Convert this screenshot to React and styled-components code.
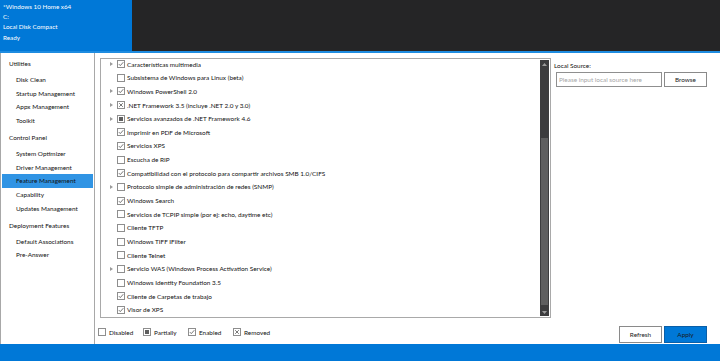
import styled, { createGlobalStyle } from "styled-components";

const GlobalStyle = createGlobalStyle`
  html, body { margin: 0; padding: 0; background: #ffffff; }
  body { font-family: Lato, "Noto Sans", sans-serif; }
`;

const features = [
  { text: "Características multimedia", state: "on", expand: true },
  { text: "Subsistema de Windows para Linux (beta)", state: "off" },
  { text: "Windows PowerShell 2.0", state: "on", expand: true },
  { text: ".NET Framework 3.5 (incluye .NET 2.0 y 3.0)", state: "removed", expand: true },
  { text: "Servicios avanzados de .NET Framework 4.6", state: "part", expand: true },
  { text: "Imprimir en PDF de Microsoft", state: "on" },
  { text: "Servicios XPS", state: "on" },
  { text: "Escucha de RIP", state: "off" },
  { text: "Compatibilidad con el protocolo para compartir archivos SMB 1.0/CIFS", state: "on" },
  { text: "Protocolo simple de administración de redes (SNMP)", state: "off", expand: true },
  { text: "Windows Search", state: "on" },
  { text: "Servicios de TCPIP simple (por ej: echo, daytime etc)", state: "off" },
  { text: "Cliente TFTP", state: "off" },
  { text: "Windows TIFF IFilter", state: "off" },
  { text: "Cliente Telnet", state: "off" },
  { text: "Servicio WAS (Windows Process Activation Service)", state: "off", expand: true },
  { text: "Windows Identity Foundation 3.5", state: "off" },
  { text: "Cliente de Carpetas de trabajo", state: "on" },
  { text: "Visor de XPS", state: "on" },
];

const nav = [
  { group: "Utilities", items: ["Disk Clean", "Startup Management", "Appx Management", "Toolkit"] },
  {
    group: "Control Panel",
    items: ["System Optimizer", "Driver Management", "Feature Management", "Capability", "Updates Management"],
  },
  { group: "Deployment Features", items: ["Default Associations", "Pre-Answer"] },
];

function Check({ state }) {
  return (
    <Box>
      {state === "on" && (
        <svg width="6" height="6" viewBox="0 0 6 6">
          <path d="M0.8 3.1 L2.3 4.6 L5.3 1.2" stroke="#555" strokeWidth="0.8" fill="none" />
        </svg>
      )}
      {state === "removed" && (
        <svg width="6" height="6" viewBox="0 0 6 6">
          <path d="M1.2 1.2 L4.8 4.8 M4.8 1.2 L1.2 4.8" stroke="#555" strokeWidth="0.8" fill="none" />
        </svg>
      )}
      {state === "part" && <Fill />}
    </Box>
  );
}

export default function App() {
  return (
    <>
      <GlobalStyle />
      <Shell>
        <Header>
          <Info>
            <InfoLine>*Windows 10 Home x64</InfoLine>
            <InfoLine>C:</InfoLine>
            <InfoLine>Local Disk Compact</InfoLine>
            <InfoLine>Ready</InfoLine>
          </Info>
          <Dark />
        </Header>
        <Body>
          <Sidebar>
            {nav.map((g) => (
              <div key={g.group}>
                <Group>{g.group}</Group>
                {g.items.map((i) => (
                  <NavItem key={i} $active={i === "Feature Management"}>
                    {i}
                  </NavItem>
                ))}
              </div>
            ))}
          </Sidebar>
          <Content>
            <Left>
              <List>
                <Rows>
                  {features.map((f) => (
                    <Row key={f.text}>
                      <Expander>{f.expand && <Arrow />}</Expander>
                      <Check state={f.state} />
                      <RowText>{f.text}</RowText>
                    </Row>
                  ))}
                </Rows>
                <Scrollbar>
                  <ScrollArrow>
                    <svg width="5" height="3" viewBox="0 0 5 3">
                      <path d="M0 3 L2.5 0 L5 3 Z" fill="#9a9a9a" />
                    </svg>
                  </ScrollArrow>
                  <Track>
                    <Thumb />
                  </Track>
                  <ScrollArrow>
                    <svg width="5" height="3" viewBox="0 0 5 3">
                      <path d="M0 0 L2.5 3 L5 0 Z" fill="#9a9a9a" />
                    </svg>
                  </ScrollArrow>
                </Scrollbar>
              </List>
              <Legend>
                <LegendItem>
                  <Check state="off" />
                  <span>Disabled</span>
                </LegendItem>
                <LegendItem>
                  <Check state="part" />
                  <span>Partially</span>
                </LegendItem>
                <LegendItem>
                  <Check state="on" />
                  <span>Enabled</span>
                </LegendItem>
                <LegendItem>
                  <Check state="removed" />
                  <span>Removed</span>
                </LegendItem>
              </Legend>
            </Left>
            <Right>
              <Label>Local Source:</Label>
              <SourceRow>
                <Input placeholder="Please input local source here" />
                <Button>Browse</Button>
              </SourceRow>
              <Actions>
                <Button $tall>Refresh</Button>
                <Button $tall $primary>
                  Apply
                </Button>
              </Actions>
            </Right>
          </Content>
        </Body>
        <Footer />
      </Shell>
    </>
  );
}

const Shell = styled.div`
  width: 720px;
  height: 361px;
  display: flex;
  flex-direction: column;
  overflow: hidden;
  font-size: 6.4px;
  color: #111111;
`;

const Header = styled.div`
  height: 51px;
  display: flex;
  border-bottom: 2px solid #1e8ce0;
`;

const Info = styled.div`
  width: 132px;
  background: #0078d7;
  color: #ffffff;
  padding: 2px 3px;
  box-sizing: border-box;
  font-size: 6.3px;
`;

const InfoLine = styled.div`
  height: 10.2px;
  line-height: 10.2px;
`;

const Dark = styled.div`
  flex: 1;
  background: #252526;
`;

const Body = styled.div`
  flex: 1;
  display: flex;
  min-height: 0;
`;

const Sidebar = styled.div`
  width: 95px;
  box-sizing: border-box;
  border-left: 1px solid #a8a8a8;
  border-right: 1px solid #a8a8a8;
  padding: 4px 1px 0;
  & > div + div {
    margin-top: 3.3px;
  }
`;

const Group = styled.div`
  height: 13.7px;
  line-height: 13.7px;
  padding-left: 7px;
  margin-bottom: 2.3px;
`;

const NavItem = styled.div`
  height: 13.7px;
  line-height: 13.7px;
  padding-left: 14px;
  background: ${(p) => (p.$active ? "#3094e4" : "transparent")};
`;

const Content = styled.div`
  flex: 1;
  display: grid;
  grid-template-columns: 451px 1fr;
  column-gap: 3px;
  padding: 5px 13px 1px 5px;
`;

const Left = styled.div`
  display: flex;
  flex-direction: column;
`;

const List = styled.div`
  height: 260px;
  box-sizing: border-box;
  border: 1px solid #a9a9a9;
  display: flex;
  overflow: hidden;
`;

const Rows = styled.div`
  flex: 1;
  margin-top: -1.8px;
  padding-left: 8px;
`;

const Row = styled.div`
  height: 13.67px;
  display: flex;
  align-items: center;
`;

const Expander = styled.span`
  width: 8px;
  display: flex;
  align-items: center;
`;

const Arrow = styled.span`
  margin-left: 1px;
  border-left: 3px solid #9a9a9a;
  border-top: 2.5px solid transparent;
  border-bottom: 2.5px solid transparent;
`;

const Box = styled.span`
  width: 8px;
  height: 8px;
  box-sizing: border-box;
  border: 1px solid #8e8e8e;
  background: #ffffff;
  display: flex;
  align-items: center;
  justify-content: center;
  flex: none;
`;

const Fill = styled.span`
  width: 4px;
  height: 4px;
  background: #5e5e5e;
`;

const RowText = styled.span`
  margin-left: 2px;
  white-space: nowrap;
`;

const Scrollbar = styled.div`
  width: 9px;
  margin: 1px 1px 1px 0;
  background: #3c3c3e;
  display: flex;
  flex-direction: column;
`;

const ScrollArrow = styled.div`
  height: 8px;
  display: flex;
  align-items: center;
  justify-content: center;
`;

const Track = styled.div`
  flex: 1;
  display: flex;
  flex-direction: column;
  justify-content: flex-end;
  padding: 0 1px 3px;
`;

const Thumb = styled.div`
  height: 167px;
  background: #5e5e5f;
`;

const Legend = styled.div`
  display: flex;
  margin: 10px 0 0 -2px;
`;

const LegendItem = styled.div`
  width: 45px;
  display: flex;
  align-items: center;
  gap: 3px;
`;

const Right = styled.div`
  display: flex;
  flex-direction: column;
`;

const Label = styled.div`
  height: 13px;
  line-height: 13px;
  margin-top: 1px;
  color: #111;
`;

const SourceRow = styled.div`
  display: flex;
  gap: 2px;
  margin-left: 2px;
`;

const Input = styled.input`
  width: 106px;
  height: 15px;
  box-sizing: border-box;
  border: 1px solid #8f8f8f;
  padding: 0 2px;
  font: inherit;
  font-size: 6.4px;
  outline: none;
  &::placeholder {
    color: #a6a6a6;
  }
`;

const Button = styled.button`
  width: 43px;
  height: ${(p) => (p.$tall ? "17px" : "15px")};
  box-sizing: border-box;
  border: 1px solid ${(p) => (p.$primary ? "#0a5fa8" : "#8a8a8a")};
  background: ${(p) => (p.$primary ? "#0078d7" : "#ffffff")};
  color: #1a1a1a;
  font: inherit;
  font-size: 6.4px;
  padding: 0;
`;

const Actions = styled.div`
  margin-top: auto;
  display: flex;
  justify-content: flex-end;
  gap: 2px;
`;

const Footer = styled.div`
  height: 17px;
  background: #0078d7;
`;
